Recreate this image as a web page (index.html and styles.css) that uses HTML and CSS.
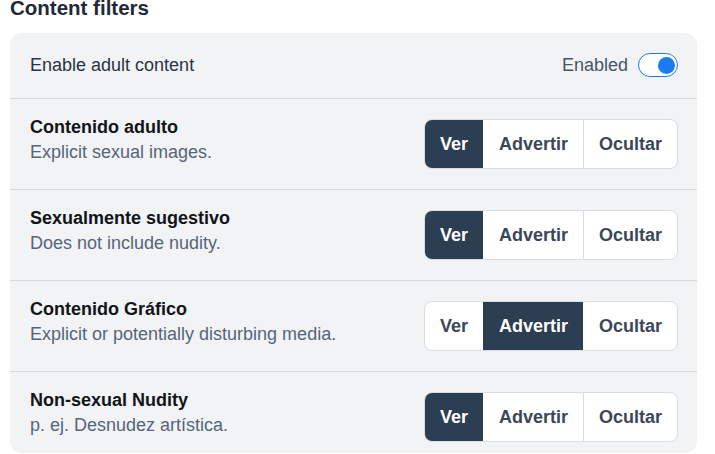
FILE: index.html
```html
<!DOCTYPE html>
<html lang="es">
<head>
<meta charset="utf-8">
<link rel="stylesheet" href="styles.css">
</head>
<body>
<h2 class="heading">Content filters</h2>
<div class="card">
  <div class="row row-top">
    <span class="label">Enable adult content</span>
    <div class="toggle-wrap">
      <span class="toggle-text">Enabled</span>
      <span class="toggle"><span class="knob"></span></span>
    </div>
  </div>
  <div class="row">
    <div class="info">
      <div class="title">Contenido adulto</div>
      <div class="desc">Explicit sexual images.</div>
    </div>
    <div class="seg">
      <span class="opt active">Ver</span>
      <span class="opt">Advertir</span>
      <span class="opt">Ocultar</span>
    </div>
  </div>
  <div class="row">
    <div class="info">
      <div class="title">Sexualmente sugestivo</div>
      <div class="desc">Does not include nudity.</div>
    </div>
    <div class="seg">
      <span class="opt active">Ver</span>
      <span class="opt">Advertir</span>
      <span class="opt">Ocultar</span>
    </div>
  </div>
  <div class="row">
    <div class="info">
      <div class="title">Contenido Gráfico</div>
      <div class="desc">Explicit or potentially disturbing media.</div>
    </div>
    <div class="seg">
      <span class="opt">Ver</span>
      <span class="opt active">Advertir</span>
      <span class="opt">Ocultar</span>
    </div>
  </div>
  <div class="row">
    <div class="info">
      <div class="title">Non-sexual Nudity</div>
      <div class="desc">p. ej. Desnudez artística.</div>
    </div>
    <div class="seg">
      <span class="opt active">Ver</span>
      <span class="opt">Advertir</span>
      <span class="opt">Ocultar</span>
    </div>
  </div>
</div>
</body>
</html>
```
FILE: styles.css
```css
* { box-sizing: border-box; }
html, body { margin: 0; padding: 0; background: #ffffff; }
body {
  font-family: "Liberation Sans", Arial, sans-serif;
  padding: 0 18px 0 10px;
  overflow: hidden;
}
.heading {
  margin: -4px 0 13px 0;
  font-size: 20.5px;
  line-height: 24px;
  font-weight: 700;
  color: #1f2937;
}
.card {
  background: #f1f3f5;
  border-radius: 12px;
  height: 420px;
  overflow: hidden;
}
.row {
  display: flex;
  align-items: center;
  justify-content: space-between;
  padding: 20px 19px 20px 20px;
  border-top: 1px solid #d6dadf;
}
.row-top {
  border-top: none;
  padding-top: 20px;
  padding-bottom: 21px;
}
.label {
  font-size: 18px;
  color: #2a3342;
}
.toggle-wrap {
  display: flex;
  align-items: center;
  gap: 10px;
}
.toggle-text {
  font-size: 18px;
  color: #4a5568;
}
.toggle {
  display: flex;
  align-items: center;
  justify-content: flex-end;
  width: 40px;
  height: 24px;
  border: 1.5px solid #1f7ae8;
  border-radius: 12px;
  background: #ffffff;
  padding: 0 2px;
}
.knob {
  width: 17px;
  height: 17px;
  border-radius: 50%;
  background: #1a7cf5;
}
.info {
  display: flex;
  flex-direction: column;
  margin: -4px 0 4px 0;
}
.title {
  font-size: 18px;
  font-weight: 700;
  line-height: 25px;
  color: #111418;
}
.desc {
  font-size: 18px;
  line-height: 25px;
  color: #56657a;
}
.seg {
  display: flex;
  height: 50px;
  border: 1px solid #d9dde2;
  border-radius: 8px;
  background: #ffffff;
  overflow: hidden;
}
.opt {
  display: flex;
  align-items: center;
  padding: 0 15px;
  font-size: 18px;
  font-weight: 700;
  color: #3b4759;
  border-left: 1px solid #d9dde2;
}
.opt:first-child { border-left: none; }
.opt.active {
  background: #2c3e52;
  color: #ffffff;
  border-left-color: #2c3e52;
}
.opt.active + .opt { border-left-color: transparent; }
```
